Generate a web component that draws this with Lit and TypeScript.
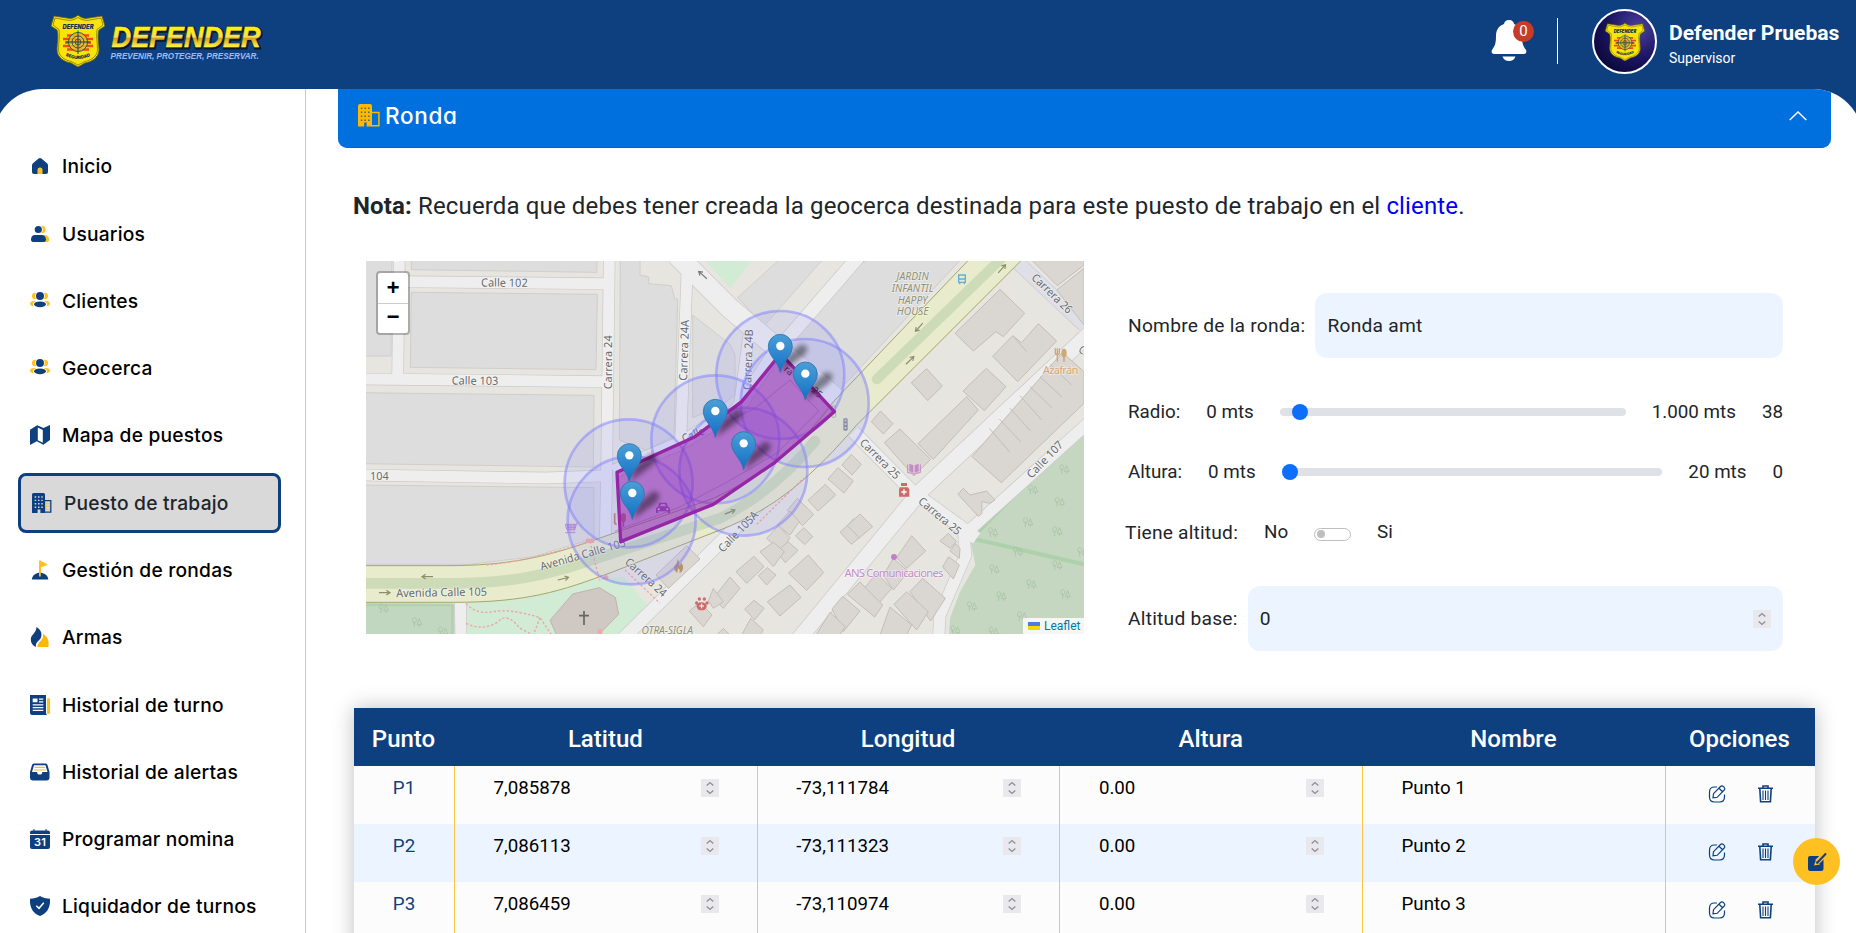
import { LitElement, html, svg, css } from "lit";
import { customElement } from "lit/decorators.js";

const NAVY = "#0e4080";
const GOLD = "#ffc121";

const shield = (w: number, h: number) => html`<svg width=${w} height=${h} viewBox="0 0 54 52">
  <path d="M27 0C30 3 34 4 38 3L51 1L54 11L48 15C46 21 48 28 48 35C48 43 40 47 34 48L27 52L20 48C14 47 6 43 6 35C6 28 8 21 6 15L0 11L3 1L16 3C20 4 24 3 27 0Z" fill="#f9e40a" stroke="#5d5a10" stroke-width=".8"/>
  <path d="M27 2.500C31 5 35 6 39 5L50 3L52 10L46 14.500C45 21 46.500 28 46.500 35C46 42 39 45.500 34 46.500L27 50L20 46.500C15 45.500 8 42 7.500 35C7.500 28 9 21 8 14.500L2 10L4 3L15 5C19 6 23 5 27 2.500Z" fill="none" stroke="#6d6912" stroke-width=".7"/>
  <path d="M16 20.500H38M12 24H42M14 27.500H40M12 31H42M16 34.500H38" stroke="#ee4a1a" stroke-width="2.400"/>
  <circle cx="27" cy="27" r="9.500" fill="#e8c830" fill-opacity=".75" stroke="#2a554a" stroke-width="1"/>
  <circle cx="27" cy="27" r="6" fill="none" stroke="#2a554a" stroke-width="1"/>
  <circle cx="27" cy="27" r="3" fill="#e8902d" stroke="#2a554a" stroke-width=".8"/>
  <path d="M27 15.500V39M15 27H39" stroke="#1d4a48" stroke-width="1"/>
  <text x="27" y="14.300" font-family="Inter" font-style="italic" font-weight="900" font-size="5.800" text-anchor="middle" textLength="31" fill="#18304a">DEFENDER</text>
  <path id="arc" d="M13 40Q27 48 41 40" fill="none"/>
  <text font-family="Inter" font-weight="900" font-size="4.400" text-anchor="middle" fill="#18304a"><textPath href="#arc" startOffset="50%">SEGURIDAD</textPath></text>
</svg>`;

const people = svg`<circle cx="5.300" cy="5" r="3.300" fill=${GOLD}/><circle cx="14.700" cy="5" r="3.300" fill=${GOLD}/><ellipse cx="4" cy="12.500" rx="4" ry="2.600" fill=${GOLD}/><ellipse cx="16" cy="12.500" rx="4" ry="2.600" fill=${GOLD}/><circle cx="10" cy="5" r="4.800" fill="#fff"/><ellipse cx="10" cy="13.500" rx="7" ry="4" fill="#fff"/><circle cx="10" cy="5" r="4" fill=${NAVY}/><ellipse cx="10" cy="13.300" rx="6" ry="2.900" fill=${NAVY}/>`;

const icons: Record<string, unknown> = {
  home: svg`<path d="M8.600 2.600a2.200 2.200 0 0 1 2.800 0L17 7.200a3 3 0 0 1 1 2.200V16a2 2 0 0 1-2 2H4a2 2 0 0 1-2-2V9.400a3 3 0 0 1 1-2.200Z" fill=${NAVY}/><path d="M7.500 18v-4a2.500 2.500 0 0 1 5 0v4Z" fill=${GOLD}/>`,
  user: svg`<circle cx="11.800" cy="5.500" r="3.800" fill=${GOLD}/><path d="M12 11h2.500c3 0 4.700 2.500 4.700 4.500 0 1.500-.7 2.500-2 2.500H12Z" fill=${GOLD}/><circle cx="8.400" cy="5.500" r="4.400" fill="#fff"/><circle cx="8.300" cy="5.500" r="3.600" fill=${NAVY}/><path d="M5 11h6.500c2.700 0 4.500 2 4.500 4.500 0 1.600-.8 2.500-2 2.500H3c-1.300 0-2-.9-2-2.500C1 13 2.400 11 5 11Z" fill=${NAVY}/>`,
  people,
  map: svg`<path fill=${NAVY} fill-rule="evenodd" d="M0 4.700 7.200.2l6.300 2.900L20 0v14.900l-6.700 4.800-6.500-3.500L0 20ZM7.800 2.500v12.700l5 2.500V4.900Z"/>`,
  building: svg`<path fill=${NAVY} d="M1.500 0h10A1.500 1.500 0 0 1 13 1.500V20H8.400v-3.600H5.600V20H0V1.500A1.500 1.500 0 0 1 1.500 0Z"/><path d="M12.500 7.700h6.300v11.500h-6.300Z" fill="#d9d9d9" stroke=${NAVY} stroke-width="1.300"/><path d="M2.700 4h8M2.700 7.400h8M2.700 10.800h8M2.700 14.200h8" stroke="#d9d9d9" stroke-width="1.400" stroke-dasharray="1.500 1.800"/><path d="M14 10.500h4M14 13.300h4M14 16.100h4" stroke=${GOLD} stroke-width="1.400" stroke-dasharray="1.500 1"/>`,
  flag: svg`<path d="M10 15V.5L18 4.500 11 7.500V15Z" fill=${GOLD}/><path d="M1.800 19.500C2.500 15 6 12.800 10 12.800s7.800 2.200 8.300 6.700Z" fill=${NAVY}/><path d="M9 .5h1.800V16.500H9Z" fill=${GOLD}/>`,
  flame: svg`<path d="M6.500 0C10.500 2.500 12.500 6 11 10.500 9.500 14 5 15 6 20 2.500 18.500.8 16 .8 12.500.8 7.500 6.500 6 6.500 0Z" fill=${NAVY}/><path d="M13 7c4.500 2.500 6.500 6.500 5.400 13H7.500c0-6 6.500-6 5.500-13Z" fill="#ffb800"/>`,
  news: svg`<path d="M0 0h16v18.500l1 1.500H2a2 2 0 0 1-2-2Z" fill=${NAVY}/><rect x="17" y="3" width="3" height="16" rx="1.500" fill=${GOLD}/><path d="M2.700 3.500h4.800v3.800H2.700ZM9 3.500h4.300v1.300H9ZM9 6.300h4.300v1.300H9ZM2.700 9.300h10.600v1.300H2.700ZM2.700 12h10.600v1.300H2.700ZM2.700 14.700h10.600v1.300H2.700Z" fill="#fff"/>`,
  inbox: svg`<path d="M4 1.500h11.500a2 2 0 0 1 2 1.500L19.500 10v5.500a3 3 0 0 1-3 3H3a3 3 0 0 1-3-3V10L2 3a2 2 0 0 1 2-1.500Z" fill=${NAVY}/><path d="M4 3.200h11.500L17.500 10h-5.200a2.600 2.600 0 0 1-5.200 0H2Z" fill="#fff"/><path d="M4.500 5.300h10.700M3.800 8h12" stroke=${GOLD} stroke-width="1.200"/>`,
  calendar: svg`<path d="M4.500 0v1.500h11V0h1v1.500H18a2 2 0 0 1 2 2V5H0V3.500a2 2 0 0 1 2-2h1.500V0ZM0 6h20v12a2 2 0 0 1-2 2H2a2 2 0 0 1-2-2Z" fill=${NAVY}/><text x="10" y="17" font-family="Inter" font-size="11" font-weight="600" text-anchor="middle" fill="#fff">31</text>`,
  guard: svg`<path d="M10 0c3 2 6.500 2.500 10 2.800C20.500 11 17.500 17 10 20 2.500 17-.5 11 0 2.800 3.500 2.500 7 2 10 0Z" fill=${NAVY}/><path d="m6.300 9.700 2.700 2.600 4.800-5.600" fill="none" stroke="#fff" stroke-width="1.500"/>`,
};

const menu: [string, string][] = [
  ["home", "Inicio"], ["user", "Usuarios"], ["people", "Clientes"], ["people", "Geocerca"],
  ["map", "Mapa de puestos"], ["building", "Puesto de trabajo"], ["flag", "Gestión de rondas"],
  ["flame", "Armas"], ["news", "Historial de turno"], ["inbox", "Historial de alertas"],
  ["calendar", "Programar nomina"], ["guard", "Liquidador de turnos"],
];

const spinner = html`<svg class="spin" width="18" height="18" viewBox="0 0 18 18"><rect width="18" height="18" fill="#e9e9ed"/><path d="M5.700 6.600 9 3.600l3.300 3M5.700 11.400l3.300 3 3.300-3" fill="none" stroke="#8f8f9d" stroke-width="1.400"/></svg>`;

const rows = [
  ["P1", "7,085878", "-73,111784", "0.00", "Punto 1"],
  ["P2", "7,086113", "-73,111323", "0.00", "Punto 2"],
  ["P3", "7,086459", "-73,110974", "0.00", "Punto 3"],
];

/* Map drawing: three drawing units per screen pixel. */
const poly = (list: string[], fill: string, stroke: string, w = 3) =>
  list.map((p) => svg`<polygon points=${p} fill=${fill} stroke=${stroke} stroke-width=${w}/>`);

const blocks = [
  "0,0 96,0 93,303 0,303", "154,0 712,0 710,52 154,44", "154,112 712,118 708,344 151,337",
  "0,413 150,415 702,421 700,636 0,626", "0,690 702,698 702,850 520,905 330,928 0,928",
  "781,0 840,0 840,60 866,66 866,86 934,92 944,130 953,132 942,545 858,585 778,555",
  "998,180 1110,268 1125,300 1125,420 1078,455 998,488",
  "1133,128 1273,0 1400,0 1213,212", "1540,0 1815,0 1420,425 1230,300 1280,225 1460,60",
];

const houses = [
  "2000,0 2172,0 2172,30 2092,92", "2090,105 2172,40 2172,210",
  "1920,103 1994,175 1930,245 1908,230 1840,288 1785,235", "2035,206 2090,258 1973,380 1898,304 1958,242 1985,263",
  "1879,340 1938,395 1873,467 1809,408", "1820,425 1855,465 1720,613 1674,566", "1620,522 1712,613 1662,663 1573,563",
  "1562,468 1599,506 1570,537 1534,500", "1700,341 1747,393 1703,437 1654,383",
  "2107,292 2172,350 2172,445 1924,683 1836,605",
  "1474,598 1504,628 1476,660 1446,630", "1434,638 1480,678 1452,714 1404,672", "1396,688 1427,720 1374,768 1344,736",
  "1312,730 1361,778 1328,812 1282,766", "1332,818 1358,845 1334,869 1306,842", "1500,777 1538,815 1474,868 1440,832",
  "1290,768 1318,800 1290,840 1252,810", "1255,812 1290,848 1262,890 1220,850", "1284,860 1314,886 1276,923 1250,890",
  "1240,862 1273,890 1240,935 1200,890", "1345,900 1391,953 1340,1006 1285,954", "1182,904 1212,935 1160,985 1128,950",
  "1222,938 1248,960 1220,990 1195,962", "1290,990 1323,1027 1260,1083 1222,1040", "1182,1036 1212,1060 1184,1095 1154,1062",
  "1110,966 1140,1000 1090,1060 1060,1030", "1655,842 1697,888 1640,940 1610,908", "1600,910 1645,950 1600,1005 1570,960",
  "1550,955 1595,1000 1545,1058 1508,1005", "1500,981 1568,1050 1544,1086 1462,1018", "1448,1024 1500,1068 1450,1130 1416,1062",
  "1410,1072 1456,1115 1438,1140 1368,1140", "1688,970 1756,1030 1712,1098 1650,1010", "1640,1010 1705,1070 1670,1125 1602,1048",
  "1590,1056 1655,1110 1640,1140 1560,1140", "1766,905 1798,930 1780,972 1748,936", "1765,835 1790,860 1770,880 1740,858",
  "1786,866 1800,880 1798,910 1770,888", "1060,1000 1090,1040 1060,1060 1045,1038", "1020,1042 1056,1080 1030,1115 988,1068",
  "1172,1090 1210,1125 1200,1140 1145,1140", "1810,700 1830,720 1880,708 1905,735 1890,745 1865,740 1866,775 1855,784 1794,718",
  "1090,1120 1110,1140 1070,1140", "980,872 1020,912 925,1000 888,960",
];

const trees = [[70, 1062], [170, 1104], [248, 1132], [2112, 645], [2018, 706], [2098, 743], [2003, 804], [2091, 831], [1898, 834], [1973, 892], [2091, 933], [1902, 945], [2013, 990], [2115, 1020], [1923, 1026], [1835, 1056], [1985, 1086], [1785, 1128], [1900, 1132], [2166, 893]];
const pins = [[808, 680], [817, 793], [1066, 547], [1151, 644], [1261, 352], [1336, 435]];
const discs = [[806, 685], [815, 796], [1066, 553], [1150, 650], [1261, 360], [1334, 444]];
const labels: [number, number, number, string, number?][] = [
  [433, 95, 0.5, "Calle 102", 140], [345, 389, 0.5, "Calle 103", 140], [58, 674, 0, "104", 56],
  [757, 322, -90, "Carrera 24", 162], [984, 286, -88, "Carrera 24A", 182], [1176, 314, -88, "Carrera 24B", 182],
  [245, 1024, -1, "Avenida Calle 105", 273], [672, 910, -16, "Avenida Calle 105", 265],
  [850, 976, 42, "Carrera 24", 155], [1552, 620, 45, "Carrera 25", 155], [1732, 792, 40, "Carrera 25", 155],
  [2068, 124, 44, "Carrera 26", 155], [2063, 622, -46, "Calle 107", 140], [1143, 838, -46, "Calle 105A", 155],
  [1004, 550, -22, "Calle", 70], [2172, 302, 35, "Car", 45],
];
const arrow = (x: number, y: number, r: number, c = "#8b8e68") =>
  svg`<path transform="translate(${x} ${y}) rotate(${r})" d="M-17 0H15M5 -7L16 0L5 7" fill="none" stroke=${c} stroke-width="3.500"/>`;

const mapView = html`<svg class="mapsvg" viewBox="18 18 2154 1119" preserveAspectRatio="none">
  <defs>
    <linearGradient id="pin" x1="0" y1="0" x2="0" y2="1"><stop offset="0" stop-color="#4b9fd6"/><stop offset="1" stop-color="#126fc6"/></linearGradient>
    <filter id="soft" x="-50%" y="-50%" width="200%" height="200%"><feGaussianBlur stdDeviation="8"/></filter>
  </defs>
  <rect x="0" y="0" width="2200" height="1160" fill="#e6e5e0"/>
  <polygon points="1020,0 1190,0 1110,98" fill="#d1ebd5"/>
  ${poly(blocks, "#dddddd", "#cfcecb")}
  <polygon points="320,1040 500,1030 720,970 790,965 870,1060 790,1140 318,1140" fill="#d1ebd5"/>
  <polygon points="0,1044 282,1046 284,1140 0,1140" fill="#c2d7bf"/>
  <path d="M0 1050H277V1140" fill="none" stroke="#b3d1af" stroke-width="8"/>
  <polygon points="2172,505 1830,850 1846,930 1800,1010 1770,1090 1767,1140 2172,1140" fill="#c5d7c0"/>
  <path d="M2172 510L1835 850L2172 928" fill="none" stroke="#add1aa" stroke-width="12"/>
  <g fill="none" stroke="#c9c9c9" stroke-width="37">
    <path d="M118 0L113 372"/><path d="M130 80L735 86"/><path d="M0 372L740 380"/><path d="M0 660L560 669L740 662"/><path d="M748 0L740 640L736 850"/><path d="M982 30L962 560"/>
    <path d="M760 650L960 565L1130 465L1240 300L1500 0" stroke-width="44"/><path d="M950 0L1110 160L1440 440" stroke-width="64"/><path d="M1172 200L1140 440"/>
    <path d="M1480 530L1660 712L1850 850" stroke-width="42"/><path d="M780 1160L1205 740" stroke-width="42"/><path d="M1310 1160L1680 710L2200 225" stroke-width="50"/>
    <path d="M2200 490L1812 840L1817 900L1740 1080L1735 1160" stroke-width="38"/><path d="M1970 20L2172 210" stroke-width="44"/><path d="M301 1035L303 1160"/>
  </g>
  <g fill="none" stroke="#eeeeee" stroke-width="33">
    <path d="M118 0L113 372"/><path d="M130 80L735 86"/><path d="M0 372L740 380"/><path d="M0 660L560 669L740 662"/><path d="M748 0L740 640L736 850"/><path d="M982 30L962 560"/>
    <path d="M760 650L960 565L1130 465L1240 300L1500 0" stroke-width="40"/><path d="M950 0L1110 160L1440 440" stroke-width="60"/><path d="M1172 200L1140 440"/>
    <path d="M1480 530L1660 712L1850 850" stroke-width="38"/><path d="M780 1160L1205 740" stroke-width="38"/><path d="M1310 1160L1680 710L2200 225" stroke-width="46"/>
    <path d="M2200 490L1812 840L1817 900L1740 1080L1735 1160" stroke-width="34"/><path d="M1970 20L2172 210" stroke-width="40" stroke="#dfdfe8"/><path d="M301 1035L303 1160"/>
  </g>
  <path d="M0 932H260C450 932 560 905 700 856L1060 730C1250 640 1330 560 1420 440L1840 0H2000L1490 510C1360 660 1250 760 1080 825L760 950C600 1010 500 1042 280 1042H0Z" fill="#e8ebcc" stroke="#a5a66c" stroke-width="3"/>
  <path d="M0 985H280C450 985 560 960 680 920L1080 790Q1240 710 1365 558" fill="none" stroke="#cddbb9" stroke-width="32" stroke-linecap="round"/>
  <path d="M1550 373L1935 0" fill="none" stroke="#cddbb9" stroke-width="30" stroke-linecap="round"/>
  ${poly(houses, "#dad6d1", "#c6bdb7")}
  <path d="M2070 328L2135 390M2040 365L2105 425M2010 395L2075 458M1980 422L2045 495M1950 460L2012 528M1918 492L1982 560M1888 520L1950 592M1958 242L2000 290M1482 790L1462 812L1500 850" fill="none" stroke="#c6bdb7" stroke-width="3"/>
  <polygon points="638,1017 718,998 766,1027 776,1078 715,1140 590,1140 570,1096" fill="#d0c8c3" stroke="#c0b4ad" stroke-width="3"/>
  <path d="M672 1068V1110M657 1082H687" stroke="#666" stroke-width="5"/>
  <g fill="none" stroke="#f1a3a3" stroke-width="4" stroke-dasharray="7 6">
    <path d="M318 1046Q350 1080 400 1070T540 1088L575 1140M318 1105Q370 1130 415 1100Q440 1070 480 1120L520 1140M540 1088L520 1140"/><path d="M690 860L718 975M745 965L718 975"/><path d="M795 945L900 1045"/><path d="M1190 808L1330 670"/><path d="M380 930Q500 920 700 856"/>
  </g>
  <g fill="none" stroke="#a3bfa0" stroke-width="2">${trees.map(([x, y]) => svg`<path d="M${x - 7} ${y + 12}V${y - 5}M${x - 7} ${y}a6 8 0 1 1 1 0M${x + 8} ${y + 12}V${y + 5}M${x + 8} ${y - 13}l7 18h-14Z"/>`)}</g>
  ${arrow(202, 965, 180)}${arrow(74, 1013, 0)}${arrow(610, 971, -14)}${arrow(1110, 771, -22)}${arrow(1677, 217, 132)}${arrow(1650, 316, -44)}${arrow(1926, 41, -48)}${arrow(1028, 60, 222, "#777")}
  <g class="ml" fill="#666a6c">${labels.map(([x, y, r, t, w]) => svg`<text transform="translate(${x} ${y}) rotate(${r})" text-anchor="middle" textLength=${w ?? 0} lengthAdjust="spacingAndGlyphs">${t}</text>`)}<text x="120" y="20" transform="rotate(-90 120 20)">C</text></g>
  <g class="ml it" text-anchor="middle" fill="#909273"><text x="1658" y="75">JARDIN</text><text x="1658" y="110">INFANTIL</text><text x="1658" y="146">HAPPY</text><text x="1658" y="181">HOUSE</text><text x="922" y="1137" textLength="155">OTRA-SIGLA</text></g>
  <text class="ml" x="1602" y="965" text-anchor="middle" textLength="297" fill="#c58bc7">ANS Comunicaciones</text>
  <text class="ml" x="2102" y="356" text-anchor="middle" textLength="107" fill="#d3a870">Azafrán</text>
  <circle cx="1602" cy="906" r="9" fill="#c182c5"/>
  <path d="M1648 626L1660 631V653L1648 648ZM1676 626L1664 631V653L1676 648Z" fill="#c58bc7"/><path d="M1643 628V653L1657 655Q1662 660 1667 655L1681 653V628" fill="none" stroke="#c58bc7" stroke-width="3"/>
  <path d="M1623 684h18v9h-18ZM1620 697h24l4 6v22h-31v-22Z" fill="#cd6a6a"/><path d="M1632 703v16M1624 711h16" stroke="#fff" stroke-width="4"/>
  <path d="M2086 280v13q0 6 6 6t6-6v-13M2092 280v40" fill="none" stroke="#d3a870" stroke-width="4"/><ellipse cx="2112" cy="294" rx="8" ry="13" fill="#d3a870"/><path d="M2112 300v20" stroke="#d3a870" stroke-width="5"/>
  <path d="M1796 60h20v22h-20ZM1799 84v4M1813 84v4M1796 72h20" fill="none" stroke="#67add6" stroke-width="4"/>
  <rect x="1450" y="490" width="13" height="37" rx="4" fill="#8c8f99"/><path d="M1456.500 494v30" stroke="#ddd" stroke-width="5" stroke-dasharray="5 6"/>
  <rect x="1415" y="453" width="12" height="34" rx="4" fill="none" stroke="#999" stroke-width="2"/>
  <g fill="#cd6a6a"><ellipse cx="1025" cy="1054" rx="15" ry="12"/><circle cx="1010" cy="1044" r="5"/><circle cx="1018" cy="1032" r="5"/><circle cx="1033" cy="1032" r="5"/><circle cx="1041" cy="1044" r="5"/></g><path d="M1025 1046v14M1018 1053h14" stroke="#fff" stroke-width="3"/>
  <path d="M953 912q7 12 4 20q6-3 6-10q12 16 2 28l-6 4q3-8-3-14q-5 7-3 14q-15-8-9-21q9-9 9-21Z" fill="#b4936c"/>
  <path d="M616 808h33l-4 15h-25Zm4 5h28m-26 5h24M624 808v22M633 808v22M642 808v22M616 833h30M648 808l5-6" fill="none" stroke="#b57bcb" stroke-width="2.500"/>
  <path d="M764 775v28q2 5 6 5M790 788v28" stroke="#c07a60" stroke-width="5" fill="none"/><ellipse cx="790" cy="788" rx="8" ry="14" fill="#c07a60"/>
  <g fill="#f0a9a9"><circle cx="684" cy="857" r="7"/><circle cx="697" cy="857" r="7"/><circle cx="738" cy="967" r="7"/><circle cx="720" cy="1130" r="8"/></g>
  ${discs.map(([x, y]) => svg`<circle cx=${x} cy=${y} r="192" fill="#8484ff" fill-opacity=".14" stroke="#7d7dff" stroke-opacity=".5" stroke-width="8"/>`)}
  <polygon points="771,652 1005,545 1145,440 1262,296 1423,470 1245,622 1060,748 782,860" fill="#8e0caa" fill-opacity=".47" stroke="#9526a5" stroke-width="10" stroke-linejoin="round"/>
  <path d="M765 828L955 758L1100 682L1250 595L1376 468L1290 375L1185 460L1100 500" fill="none" stroke="#7c3f91" stroke-opacity=".45" stroke-width="2.500"/>
  <path d="M888 767v-8l6-4l4-12h22l4 12l6 4v15h-7v-5h-28v5h-7Z" fill="#8e3db0"/><path d="M900 754l3-7h12l3 7Z" fill="#b16fc8"/><circle cx="896" cy="763" r="3" fill="#c79ad4"/><circle cx="922" cy="763" r="3" fill="#c79ad4"/>
  <g font-family="Noto Sans" font-size="32" fill="#55305f"><text transform="translate(1270 345) rotate(43)" font-size="29">ra</text><text transform="translate(1352 408) rotate(43)" font-size="29">25</text></g>
  ${pins.map(([x, y]) => svg`<path d="M${x + 2} ${y}l18-48l42-36q34 4 8 34Z" fill="#000" opacity=".42" filter="url(#soft)"/>`)}
  ${pins.map(([x, y]) => svg`<path d="M${x} ${y}C${x - 8} ${y - 36} ${x - 36} ${y - 48} ${x - 36} ${y - 78}a36 36 0 0 1 72 0C${x + 36} ${y - 48} ${x + 8} ${y - 36} ${x} ${y}Z" fill="url(#pin)" stroke="#2d74ac" stroke-width="2.500"/><circle cx=${x} cy=${y - 79} r="12.500" fill="#fff"/>`)}
</svg>`;

@customElement("app-root")
export class AppRoot extends LitElement {
  static styles = css`
    :host { display: block; height: 933px; overflow: hidden; position: relative; background: #0e4080; font-family: Roboto, sans-serif; color: #212529; }
    * { box-sizing: border-box; }
    svg { display: block; flex: none; }
    .top { height: 89px; display: flex; align-items: flex-start; padding: 0 18px 0 51px; color: #fff; }
    .logo { display: flex; padding-top: 15px; }
    .brand { padding-top: 1px; }
    .spacer { flex: 1; }
    .bell { position: relative; width: 36px; margin-top: 20px; }
    .badge { position: absolute; left: 22px; top: 1px; width: 21px; height: 21px; border-radius: 50%; background: #c53d28; font-size: 15px; line-height: 21px; text-align: center; }
    .sep { width: 1px; height: 46px; margin: 18px 34px 0 30px; background: #fff; }
    .avatar { width: 65px; height: 65px; margin: 9px 12px 0 0; border: 2px solid #fff; border-radius: 50%; background: radial-gradient(circle at 72% 28%, #4b429f, #1b1562 48%, #0b0839 80%); display: grid; place-items: center; }
    .who { width: 169px; padding-top: 20px; white-space: nowrap; }
    .name { font-size: 21.100px; font-weight: 700; line-height: 26px; }
    .role { font-size: 14px; line-height: 24px; }
    .page { height: 844px; margin: 0 -7px; padding: 0 7px; border-radius: 50px 50px 0 0; overflow: hidden; background: #fff; display: flex; }
    .side { width: 306px; border-right: 1px solid #c9c9c9; padding: 47.500px 24px 0 18px; flex: none; }
    .item { height: 59.600px; margin-bottom: 7.700px; display: flex; align-items: center; gap: 12px; padding-left: 12px; font: 500 19.200px Inter, sans-serif; letter-spacing: .22px; color: #000; white-space: nowrap; }
    .item.on { border: 3px solid #0e4080; border-radius: 8px; background: #d9d9d9; padding-left: 11px; color: #212529; }
    .main { flex: 1; padding: 0 25px 0 32px; min-width: 0; }
    .bar { height: 59px; background: #0070de; border-bottom: 1px solid #0064c8; border-radius: 0 0 9px 9px; display: flex; align-items: center; padding: 0 24px 5px 20px; color: #fff; font: 500 22.500px Inter, sans-serif; letter-spacing: .7px; font-feature-settings: "cv11"; justify-content: space-between; }
    .title { display: flex; align-items: center; gap: 5px; }
    .note { margin: 42px 0 0 15px; font-size: 24px; letter-spacing: .14px; line-height: 32px; white-space: nowrap; height: 71px; }
    .link { color: #0000f4; }
    .cols { display: flex; margin-left: 28px; height: 447px; }
    .map { width: 718px; height: 373px; position: relative; overflow: hidden; }
    .mapsvg { width: 718px; height: 373px; }
    .ml { font-family: "Noto Sans", sans-serif; font-size: 34px; paint-order: stroke; stroke: #fff; stroke-opacity: .45; stroke-width: 5px; }
    .it { font-style: italic; font-size: 31px; }
    .zoom { position: absolute; left: 10px; top: 10px; width: 34px; height: 64px; border: 2px solid rgba(0,0,0,.25); border-radius: 4px; background: #fff; background-clip: padding-box; color: #000; font: bold 22px "Liberation Mono", monospace; text-align: center; }
    .z { height: 30px; display: grid; place-items: center; padding-top: 2px; }
    .z + .z { border-top: 1px solid #ccc; padding: 0; }
    .attr { position: absolute; right: 0; bottom: 0; height: 16px; width: 61px; padding-left: 5px; background: rgba(255,255,255,.8); display: flex; gap: 4px; align-items: center; font: 12px Roboto, sans-serif; color: #0078a8; }
    .form { margin-left: 44px; padding-top: 32px; width: 655px; font-size: 18.800px; white-space: nowrap; }
    .line { display: flex; align-items: center; }
    .f1 { height: 65px; gap: 10px; font-size: 19.200px; letter-spacing: .24px; }
    .field { flex: 1; height: 65px; border-radius: 12px; background: #ecf5ff; display: flex; align-items: center; justify-content: space-between; padding: 0 12px; }
    .r { height: 60px; gap: 26px; }
    .r1 { margin-top: 24px; }
    .tiene { margin-left: -3px; }
    .wide { font-size: 19.200px; letter-spacing: .2px; }
    .base { margin-top: 24px; }
    .range { flex: 1; height: 8px; border-radius: 4px; background: #dee2e6; display: flex; align-items: center; }
    .thumb { width: 16px; height: 16px; border-radius: 50%; background: #0d6efd; flex: none; }
    .sw { width: 37px; height: 13px; border: 1px solid #bfbfbf; border-radius: 7px; padding: 1.500px; margin-top: 4px; }
    .knob { width: 8px; height: 8px; border-radius: 50%; background: #bfbfbf; }
    .table { margin: 0 16px; box-shadow: 0 0 20px rgba(0,0,0,.25); height: 260px; }
    .row { display: grid; grid-template-columns: 101px 302.700px 302.700px 302.700px 302.700px 1fr; height: 58px; background: #fcfcfc; }
    .row.alt { background: #ecf5ff; }
    .head { background: #0e4080; color: #fff; font-weight: 500; font-size: 24px; }
    .th { display: grid; place-items: center; padding: 4px 2px 0 0; }
    .td { border-right: 1px solid #fbc642; padding: 13px 38px 0 38.500px; display: flex; justify-content: space-between; font-size: 18.700px; line-height: 18px; color: #000; }
    .td.id { padding: 13px 0 0; justify-content: center; color: #0e4080; }
    .td.ops { border: 0; padding: 19px 42px 0 42px; }
    .fab { position: absolute; left: 1793px; top: 838px; width: 47px; height: 47px; border-radius: 50%; background: #ffc121; display: grid; place-items: center; }
  `;

  render() {
    return html`
      <header class="top">
        <div class="logo">${shield(54, 52)}
          <svg class="brand" width="176" height="52" viewBox="-6 0 176 52">
            <defs><linearGradient id="gold" x1="0" y1="0" x2="0" y2="1"><stop offset=".25" stop-color="#fff000"/><stop offset=".5" stop-color="#f6e05a"/><stop offset=".55" stop-color="#d9a416"/><stop offset=".8" stop-color="#fff04a"/></linearGradient></defs>
            <text x="0" y="33" font-family="Liberation Sans" font-style="italic" font-weight="700" font-size="30" textLength="152" lengthAdjust="spacingAndGlyphs" stroke="#0b1a2c" stroke-width="3" fill="#0b1a2c">DEFENDER</text>
            <text x="-1" y="32" font-family="Liberation Sans" font-style="italic" font-weight="700" font-size="30" textLength="152" lengthAdjust="spacingAndGlyphs" fill="url(#gold)" stroke="url(#gold)" stroke-width=".6">DEFENDER</text>
            <text x="-2" y="43.800" font-family="Liberation Sans" font-style="italic" font-weight="700" font-size="9.600" textLength="151" lengthAdjust="spacingAndGlyphs" fill="#9dbcf4">PREVENIR, PROTEGER, PRESERVAR.</text>
          </svg>
        </div>
        <div class="spacer"></div>
        <div class="bell">
          <svg width="36" height="41" viewBox="0 0 36 41"><path d="M18 0c3 0 5 2 5 4 6 2 8 7 8 12 0 7 1 10 4 14 1 2 0 4-2 4H3c-2 0-3-2-2-4 3-4 4-7 4-14C5 11 7 6 13 4c0-2 2-4 5-4ZM11.500 36.500h13c-1 3-3.500 4.500-6.500 4.500s-5.500-1.500-6.500-4.500Z" fill="#fff"/></svg>
          <div class="badge">0</div>
        </div>
        <div class="sep"></div>
        <div class="avatar">${shield(40, 38)}</div>
        <div class="who"><div class="name">Defender Pruebas</div><div class="role">Supervisor</div></div>
      </header>
      <div class="page">
        <nav class="side">
          ${menu.map(([icon, label]) => html`<div class="item ${icon === "building" ? "on" : ""}"><svg width="20" height="20" viewBox="0 0 20 20">${icons[icon]}</svg><span>${label}</span></div>`)}
        </nav>
        <main class="main">
          <div class="bar">
            <div class="title"><svg width="22" height="23" viewBox="0 0 22 23"><path d="M2 0h10a2 2 0 0 1 2 2v20.500H8.600v-4H6.200v4H0V2a2 2 0 0 1 2-2Z" fill="#fdb900"/><path d="M13.500 8.600h7.400v13.200h-7.400" fill="none" stroke="#fdb900" stroke-width="1.500"/><path d="M2.800 4.300h9M2.800 8.300h9M2.800 12.300h9M2.800 16.300h9" stroke="#5b6f57" stroke-width="1.500" stroke-dasharray="1.600 2"/></svg><span>Ronda</span></div>
            <svg width="18" height="10" viewBox="0 0 18 10"><path d="M.7 9 9 1l8.300 8" fill="none" stroke="#fff" stroke-width="1.500"/></svg>
          </div>
          <div class="note"><b>Nota:</b> Recuerda que debes tener creada la geocerca destinada para este puesto de trabajo en el <span class="link">cliente</span>.</div>
          <div class="cols">
            <div class="map">${mapView}
              <div class="zoom"><div class="z">+</div><div class="z">−</div></div>
              <div class="attr"><svg width="12" height="8" viewBox="0 0 12 8"><path fill="#4c7be1" d="M0 0h12v4H0z"/><path fill="#ffd500" d="M0 4h12v4H0z"/></svg>Leaflet</div>
            </div>
            <div class="form">
              <div class="line f1"><span>Nombre de la ronda:</span><div class="field">Ronda amt</div></div>
              <div class="line r r1"><span>Radio:</span><span>0 mts</span><div class="range"><div class="thumb" style="margin-left:${(347 - 16) * 0.038}px"></div></div><span>1.000 mts</span><span>38</span></div>
              <div class="line r"><span>Altura:</span><span>0 mts</span><div class="range"><div class="thumb"></div></div><span>20 mts</span><span>0</span></div>
              <div class="line r tiene"><span class="wide">Tiene altitud:</span><span>No</span><div class="sw"><div class="knob"></div></div><span>Si</span></div>
              <div class="line f1 base"><span>Altitud base:</span><div class="field">0${spinner}</div></div>
            </div>
          </div>
          <div class="table">
            <div class="row head">${["Punto", "Latitud", "Longitud", "Altura", "Nombre", "Opciones"].map((t) => html`<div class="th">${t}</div>`)}</div>
            ${rows.map((r, i) => html`<div class="row ${i === 1 ? "alt" : ""}">
              <div class="td id">${r[0]}</div>
              ${[r[1], r[2], r[3]].map((v) => html`<div class="td"><span>${v}</span>${spinner}</div>`)}
              <div class="td">${r[4]}</div>
              <div class="td ops">
                <svg width="18" height="18" viewBox="0 0 18 18" fill="none" stroke="#0e4080" stroke-width="1.200"><path d="M9 2H6.500C3 2 1.500 3.500 1.500 7v5c0 3.500 1.500 5 5 5h5c3.500 0 5-1.500 5-5V9.500"/><path d="m12.500 1.500-7 7.200L5 12.800l4.200-.5 7-7.300c1.800-2-1.700-5.300-3.700-3.500ZM11 3.200l3.600 3.500"/></svg>
                <svg width="15" height="18" viewBox="0 0 15 18" fill="none" stroke="#0e4080"><path d="M0 3.200h15M5 3V1h5v2" stroke-width="1.600"/><path d="m1.800 3.500.8 13.300h9.800l.8-13.300" stroke-width="1.600"/><path d="M5 5.500v9.500M7.500 5.500v9.500M10 5.500v9.500" stroke-width="1.100"/></svg>
              </div>
            </div>`)}
          </div>
        </main>
      </div>
      <div class="fab"><svg width="20" height="20" viewBox="0 0 20 20"><path d="M3 4h13.500v12.500a2.500 2.500 0 0 1-2.500 2.500H3.500a2.500 2.500 0 0 1-2.500-2.500V6a2 2 0 0 1 2-2Z" fill="#0e4080"/><path d="M19 1.500 10 10" stroke="#ffc121" stroke-width="5.500"/><path d="M7 13.500 8.500 9l4.500 3.500Z" fill="#ffc121"/><path d="M19 1.500 9.500 11.500" stroke="#0e4080" stroke-width="2"/></svg></div>`;
  }
}
